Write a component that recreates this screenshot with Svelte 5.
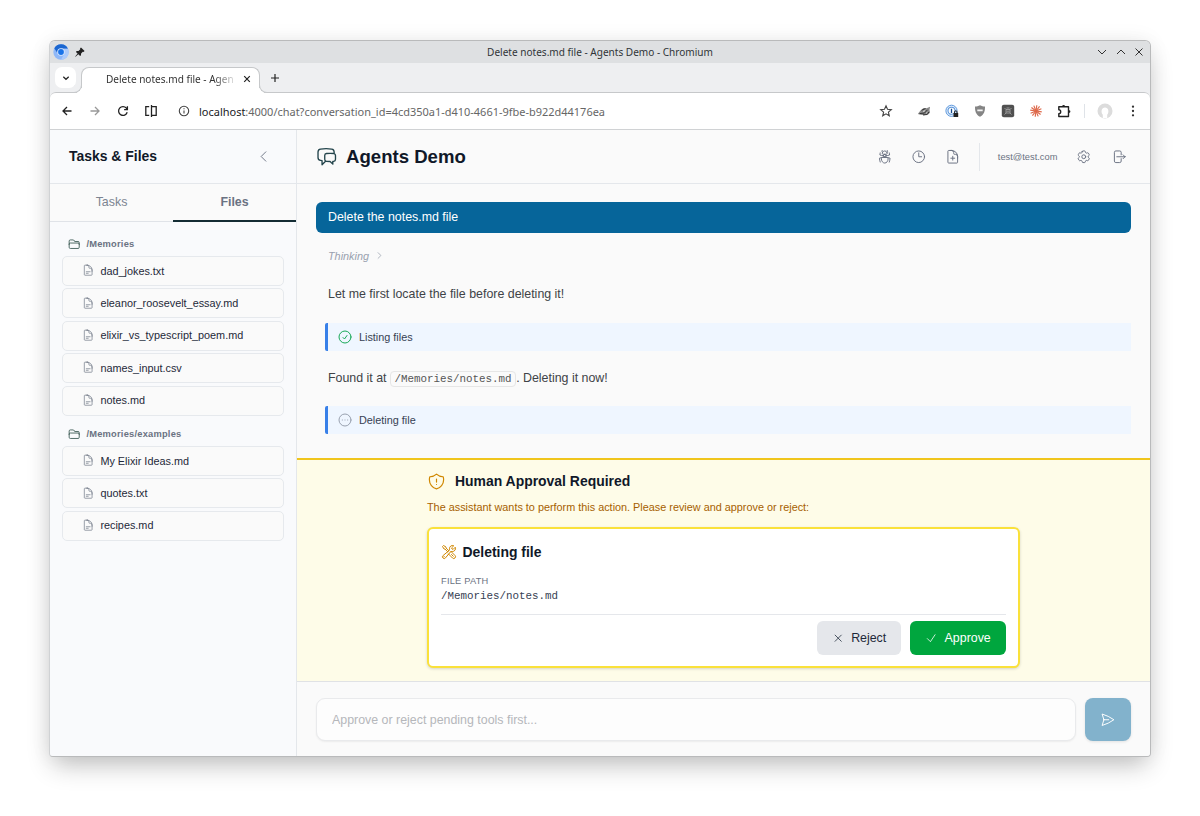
<script>
  const chatIcon = "M20.25 8.511c.884.284 1.5 1.128 1.5 2.097v4.286c0 1.136-.847 2.1-1.98 2.193-.34.027-.68.052-1.02.072v3.091l-3-3c-1.354 0-2.694-.055-4.02-.163a2.115 2.115 0 0 1-.825-.242m9.345-8.334a2.126 2.126 0 0 0-.476-.095 48.64 48.64 0 0 0-8.048 0c-1.131.094-1.976 1.057-1.976 2.192v4.286c0 .837.46 1.58 1.155 1.951m9.345-8.334V6.637c0-1.621-1.152-3.026-2.76-3.235A48.455 48.455 0 0 0 11.25 3c-2.115 0-4.198.137-6.24.402-1.608.209-2.76 1.614-2.76 3.235v6.226c0 1.621 1.152 3.026 2.76 3.235.577.075 1.157.14 1.74.194V21l4.155-4.155";
  const bugIcon = "M12 12.75c1.148 0 2.278.08 3.383.237 1.037.146 1.866.966 1.866 2.013 0 3.728-2.35 6.75-5.25 6.75S6.75 18.728 6.75 15c0-1.046.83-1.867 1.866-2.013A24.204 24.204 0 0 1 12 12.75Zm0 0c2.883 0 5.647.508 8.207 1.44a23.91 23.91 0 0 1-1.152 6.06M12 12.75c-2.883 0-5.647.508-8.208 1.44.125 2.104.52 4.136 1.153 6.06M12 12.75a2.25 2.25 0 0 0 2.248-2.354M12 12.75a2.25 2.25 0 0 1-2.248-2.354M12 8.25c.995 0 1.971-.08 2.922-.236.403-.066.74-.358.795-.762a3.778 3.778 0 0 0-.399-2.25M12 8.25c-.995 0-1.97-.08-2.922-.236-.402-.066-.74-.358-.795-.762a3.734 3.734 0 0 1 .4-2.253M12 8.25a2.25 2.25 0 0 0-2.248 2.146M12 8.25a2.25 2.25 0 0 1 2.248 2.146M8.683 5a6.032 6.032 0 0 1-1.155-1.002c.07-.63.27-1.222.574-1.747m.581 2.749A3.75 3.75 0 0 1 15.318 5m0 0c.427-.283.815-.62 1.155-.999a4.471 4.471 0 0 0-.575-1.752M4.921 6a24.048 24.048 0 0 0-.392 3.314c1.668.546 3.416.914 5.223 1.082M19.08 6c.205 1.08.337 2.187.392 3.314a23.882 23.882 0 0 1-5.223 1.082";
  const clockIcon = "M12 6v6h4.5m4.5 0a9 9 0 1 1-18 0 9 9 0 0 1 18 0Z";
  const docPlusIcon = "M19.5 14.25v-2.625a3.375 3.375 0 0 0-3.375-3.375h-1.5A1.125 1.125 0 0 1 13.5 7.125v-1.5a3.375 3.375 0 0 0-3.375-3.375H8.25m3.75 9v6m3-3H9m1.5-12H5.625c-.621 0-1.125.504-1.125 1.125v17.25c0 .621.504 1.125 1.125 1.125h12.75c.621 0 1.125-.504 1.125-1.125V11.25a9 9 0 0 0-9-9Z";
  const docIcon = "M19.5 14.25v-2.625a3.375 3.375 0 0 0-3.375-3.375h-1.5A1.125 1.125 0 0 1 13.5 7.125v-1.5a3.375 3.375 0 0 0-3.375-3.375H8.25m0 12.75h7.5m-7.5 3H12M10.5 2.25H5.625c-.621 0-1.125.504-1.125 1.125v17.25c0 .621.504 1.125 1.125 1.125h12.75c.621 0 1.125-.504 1.125-1.125V11.25a9 9 0 0 0-9-9Z";
  const folderIcon = "M2.25 12.75V12A2.25 2.25 0 0 1 4.5 9.75h15A2.25 2.25 0 0 1 21.75 12v.75m-8.69-6.44-2.12-2.12a1.5 1.5 0 0 0-1.061-.44H4.5A2.25 2.25 0 0 0 2.25 6v12a2.25 2.25 0 0 0 2.25 2.25h15A2.25 2.25 0 0 0 21.75 18V9a2.25 2.25 0 0 0-2.25-2.25h-5.379a1.5 1.5 0 0 1-1.06-.44Z";
  const cogIcon = "M9.594 3.94c.09-.542.56-.94 1.11-.94h2.593c.55 0 1.02.398 1.11.94l.213 1.281c.063.374.313.686.645.87.074.04.147.083.22.127.325.196.72.257 1.075.124l1.217-.456a1.125 1.125 0 0 1 1.37.49l1.296 2.247a1.125 1.125 0 0 1-.26 1.431l-1.003.827c-.293.241-.438.613-.43.992a7.723 7.723 0 0 1 0 .255c-.008.378.137.75.43.991l1.004.827c.424.35.534.955.26 1.43l-1.298 2.247a1.125 1.125 0 0 1-1.369.491l-1.217-.456c-.355-.133-.75-.072-1.076.124a6.47 6.47 0 0 1-.22.128c-.331.183-.581.495-.644.869l-.213 1.281c-.09.543-.56.94-1.11.94h-2.594c-.55 0-1.019-.398-1.11-.94l-.213-1.281c-.062-.374-.312-.686-.644-.87a6.52 6.52 0 0 1-.22-.127c-.325-.196-.72-.257-1.076-.124l-1.217.456a1.125 1.125 0 0 1-1.369-.49l-1.297-2.247a1.125 1.125 0 0 1 .26-1.431l1.004-.827c.292-.24.437-.613.43-.991a6.932 6.932 0 0 1 0-.255c.007-.38-.138-.751-.43-.992l-1.004-.827a1.125 1.125 0 0 1-.26-1.43l1.297-2.247a1.125 1.125 0 0 1 1.37-.491l1.216.456c.356.133.751.072 1.076-.124.072-.044.146-.086.22-.128.332-.183.582-.495.644-.869l.214-1.28ZM15 12a3 3 0 1 1-6 0 3 3 0 0 1 6 0Z";
  const logoutIcon = "M15.75 9V5.25A2.25 2.25 0 0 0 13.5 3h-6a2.25 2.25 0 0 0-2.25 2.25v13.5A2.25 2.25 0 0 0 7.5 21h6a2.25 2.25 0 0 0 2.25-2.25V15m3 0 3-3m0 0-3-3m3 3H9";
  const shieldIcon = "M12 9v3.75m0-10.036A11.959 11.959 0 0 1 3.598 6 11.99 11.99 0 0 0 3 9.75c0 5.592 3.824 10.29 9 11.622 5.176-1.332 9-6.03 9-11.622 0-1.31-.21-2.57-.598-3.75h-.152c-3.196 0-6.1-1.25-8.25-3.286Zm0 13.036h.008v.008H12v-.008Z";
  const toolsIcon = "M11.42 15.17 17.25 21A2.652 2.652 0 0 0 21 17.25l-5.877-5.877M11.42 15.17l2.496-3.03c.317-.384.74-.626 1.208-.766M11.42 15.17l-4.655 5.653a2.548 2.548 0 1 1-3.586-3.586l6.837-5.63m5.108-.233c.55-.164 1.163-.188 1.743-.14a4.5 4.5 0 0 0 4.486-6.336l-3.276 3.277a3.004 3.004 0 0 1-2.25-2.25l3.276-3.276a4.5 4.5 0 0 0-6.336 4.486c.091 1.076-.071 2.264-.904 2.95l-.102.085m-1.745 1.437L5.909 7.5H4.5L2.25 3.75l1.5-1.5L7.5 4.5v1.409l4.26 4.26m-1.745 1.437 1.745-1.437m6.615 8.206L15.75 15.75M4.867 19.125h.008v.008h-.008v-.008Z";
  const sendIcon = "M6 12 3.269 3.125A59.769 59.769 0 0 1 21.485 12 59.768 59.768 0 0 1 3.27 20.875L5.999 12Zm0 0h7.5";
  const checkCircleIcon = "M9 12.75 11.25 15 15 9.75M21 12a9 9 0 1 1-18 0 9 9 0 0 1 18 0Z";
  const pendingIcon = "M7.9 12h.2m3.8 0h.2m3.8 0h.2M21 12a9 9 0 1 1-18 0 9 9 0 0 1 18 0Z";

  const folders = [
    {
      path: "/Memories",
      files: ["dad_jokes.txt", "eleanor_roosevelt_essay.md", "elixir_vs_typescript_poem.md", "names_input.csv", "notes.md"],
    },
    { path: "/Memories/examples", files: ["My Elixir Ideas.md", "quotes.txt", "recipes.md"] },
  ];

  const rays = [0, 30, 60, 90, 120, 150, 180, 210, 240, 270, 300, 330];

  let tab = $state("Files");
  let draft = $state("");
</script>

{#snippet icon(d, size, width = 1.5)}
  <svg width={size} height={size} viewBox="0 0 24 24" fill="none" stroke="currentColor" stroke-width={width} stroke-linecap="round" stroke-linejoin="round"><path {d} /></svg>
{/snippet}

<div class="window">
  <div class="titlebar">
    <div class="title-left">
      <svg width="16" height="16" viewBox="0 0 16 16">
        <circle cx="8" cy="8" r="7.7" fill="#8fb8f8" />
        <path d="M1.3 4.2A7.7 7.7 0 0 1 15 4.8H8A3.6 3.6 0 0 0 4.8 9.8Z" fill="#1b66d0" />
        <path d="M15 4.8A7.7 7.7 0 0 1 8 15.7l3.2-5.6A3.7 3.7 0 0 0 8 4.8Z" fill="#aecbfa" />
        <circle cx="8" cy="8" r="3.8" fill="#dbe8fd" />
        <circle cx="8" cy="8" r="2.9" fill="#1a73e8" />
      </svg>
      <svg width="10" height="10" viewBox="0 0 10 10"><path d="M6 .4 9.600 4 8.500 4.900 7.800 4.700 6.100 6.500 6 8.300 5.100 9.100 3.300 7.300.6 9.800.2 9.400 2.600 6.600 .9 4.900 1.700 4 3.500 3.900 5.300 2.200 5.100 1.300Z" fill="#222" /></svg>
    </div>
    <span class="title">Delete notes.md file - Agents Demo - Chromium</span>
    <div class="controls">
      <svg width="10" height="10" viewBox="0 0 10 10"><path d="m1 3 4 4 4-4" /></svg>
      <svg width="10" height="10" viewBox="0 0 10 10"><path d="m1 7 4-4 4 4" /></svg>
      <svg width="10" height="10" viewBox="0 0 10 10"><path d="m1.5 1.5 7 7m0-7-7 7" /></svg>
    </div>
  </div>

  <div class="tabstrip">
    <button class="tab-search" aria-label="Search tabs"><svg width="8" height="8" viewBox="0 0 8 8"><path d="m1.3 2.7 2.7 2.6 2.7-2.6" /></svg></button>
    <div class="browser-tab">
      <span>Delete notes.md file - Agen</span>
      <svg width="8" height="8" viewBox="0 0 8 8"><path d="m1.2 1.2 5.6 5.6m0-5.6L1.2 6.8" /></svg>
    </div>
    <svg class="plus" width="10" height="10" viewBox="0 0 10 10"><path d="M5 1v8M1 5h8" /></svg>
  </div>

  <div class="toolbar">
    <div class="nav">
      <svg width="14" height="14" viewBox="0 0 14 14"><path d="M11.5 7H3m4-4L3 7l4 4" /></svg>
      <svg class="off" width="14" height="14" viewBox="0 0 14 14"><path d="M2.5 7H11M7 3l4 4-4 4" /></svg>
      <svg width="14" height="14" viewBox="0 0 14 14"><path d="M11.2 8.3A4.400 4.400 0 1 1 10.4 4.200L11.4 5.300M11.4 2.300v3.300H8.100" /></svg>
      <svg width="14" height="14" viewBox="0 0 14 14"><path d="M5.200 2.600H1.800v8.800H5.200M7.500 2.600h4.700v8.800H7.500M7.500 1v12" /></svg>
    </div>
    <div class="url">
      <svg width="12" height="12" viewBox="0 0 12 12"><circle cx="6" cy="6" r="4.7" /><path d="M6 5.4v3.1M6 3.3v1" /></svg>
      <span><b>localhost</b>:4000/chat?conversation_id=4cd350a1-d410-4661-9fbe-b922d44176ea</span>
    </div>
    <svg class="star" width="14" height="14" viewBox="0 0 14 14"><path d="m7 1.8 1.5 3.5 3.8.3-2.9 2.5.9 3.7L7 9.8l-3.3 2 .9-3.7-2.9-2.5 3.8-.3z" /></svg>
    <div class="extensions">
      <svg width="14" height="14" viewBox="0 0 14 14">
        <path d="M.8 10 3.500 6.500 6.500 4l3 .2 3.600-1.400-.6 3.200.6 2.600-2 2-4 .6-3.400-.4Z" fill="#8a8a8a" />
        <path d="m4.500 6.300 4-1.800M2.500 9.600l5-.6 3-3.200M6 10.900l4.200-.4 1.600-2.500" stroke="#333" stroke-width="1" fill="none" />
        <path d="m6 7.500 2-.8M9.200 9.200l1-.9" stroke="#fff" stroke-width=".7" />
      </svg>
      <svg width="14" height="14" viewBox="0 0 14 14">
        <circle cx="6.5" cy="6.8" r="5.6" fill="#e4effb" stroke="#5e98dc" stroke-width="1" />
        <circle cx="6.5" cy="6.8" r="3.5" fill="#fff" stroke="#5e98dc" stroke-width="1.1" />
        <path d="M6.5 4.7v4.2" stroke="#174a8c" stroke-width="1.3" />
        <path d="M8.500 9h4.700v4H8.500z" fill="#222" />
        <path d="M9.500 9.200V8.100a1.300 1.300 0 0 1 2.600 0v1.100" fill="none" stroke="#222" />
      </svg>
      <svg width="14" height="14" viewBox="0 0 14 14"><path d="M7 1.2c1.6.9 3.3 1.2 5 1.3.1 5-1 8-5 10.3C3 10.5 1.9 7.5 2 2.5c1.7-.1 3.4-.4 5-1.3Z" fill="#858585" /><path d="M4.3 6.4h5.4" stroke="#f4f4f4" stroke-width="1.8" /></svg>
      <svg width="14" height="14" viewBox="0 0 14 14"><rect x=".8" y=".8" width="12.4" height="12.4" rx="2" fill="#505050" /><path d="M5 5.500h4v3.500H5zM3.500 4l1.500 1.500M10.500 4 9 5.500M3.500 10.500 5 9M10.500 10.500 9 9M5.500 7.200h3M5.500 4h3" fill="none" stroke="#aaa" stroke-width=".8" /></svg>
      <svg width="14" height="14" viewBox="0 0 14 14">
        {#each rays as angle}
          <path d="M7 7V1.2" stroke="#dd6748" stroke-width="1.15" transform="rotate({angle + 8} 7 7)" />
        {/each}
      </svg>
      <svg width="14" height="14" viewBox="0 0 14 14"><path d="M1.800 2.800h9.700v9.700H1.800V9.600a1.900 1.900 0 0 0 0-3.800Z" fill="none" stroke="#222" stroke-width="1.4" stroke-linejoin="round" /><path d="M5.200 2.300a1.400 1.400 0 0 1 2.800 0ZM12 6.200a1.400 1.400 0 0 1 0 2.800Z" fill="#222" /></svg>
    </div>
    <div class="separator"></div>
    <svg class="avatar" width="16" height="16" viewBox="0 0 16 16"><circle cx="8" cy="8" r="7.5" fill="#dcdcdc" /><path d="M5.8 15v-3.2C3.5 9 4.6 4.5 8 4.5S12.5 9 10.2 11.8V15Z" fill="#fff" /></svg>
    <svg class="dots" width="4" height="12" viewBox="0 0 4 12"><circle cx="2" cy="1.7" r="1.15" /><circle cx="2" cy="6" r="1.15" /><circle cx="2" cy="10.3" r="1.15" /></svg>
  </div>

  <div class="app">
    <aside>
      <div class="side-head">
        <h2>Tasks &amp; Files</h2>
        {@render icon("M15.75 19.5 8.25 12l7.5-7.5", 15)}
      </div>
      <div class="tabs">
        {#each ["Tasks", "Files"] as name}
          <button class:active={tab === name} onclick={() => (tab = name)}>{name}</button>
        {/each}
      </div>
      <div class="tree">
        {#each folders as folder}
          <div class="folder">
            {@render icon(folderIcon, 12.4, 1.7)}
            <span>{folder.path}</span>
          </div>
          <div class="files">
            {#each folder.files as file}
              <div class="file">
                {@render icon(docIcon, 12.4)}
                <span>{file}</span>
              </div>
            {/each}
          </div>
        {/each}
      </div>
    </aside>

    <main>
      <header>
        <div class="brand">{@render icon(chatIcon, 21.5)}</div>
        <h1>Agents Demo</h1>
        <div class="actions">
          {@render icon(bugIcon, 15.5)}
          {@render icon(clockIcon, 15.5)}
          {@render icon(docPlusIcon, 15.5)}
        </div>
        <div class="account">
          <span>test@test.com</span>
          {@render icon(cogIcon, 15.5)}
          {@render icon(logoutIcon, 15.5)}
        </div>
      </header>

      <section class="messages">
        <div class="user-message">Delete the notes.md file</div>
        <div class="thinking">Thinking {@render icon("m8.25 4.5 7.5 7.5-7.5 7.5", 9, 2)}</div>
        <div class="reply">Let me first locate the file before deleting it!</div>
        <div class="tool-call"><i class="done">{@render icon(checkCircleIcon, 16)}</i>Listing files</div>
        <div class="reply">Found it at <code>/Memories/notes.md</code>. Deleting it now!</div>
        <div class="tool-call"><i>{@render icon(pendingIcon, 16)}</i>Deleting file</div>
      </section>

      <section class="approval">
        <div class="approval-inner">
          <h3>{@render icon(shieldIcon, 19)}Human Approval Required</h3>
          <p>The assistant wants to perform this action. Please review and approve or reject:</p>
          <div class="card">
            <h4>{@render icon(toolsIcon, 16)}Deleting file</h4>
            <div class="label">FILE PATH</div>
            <div class="value">/Memories/notes.md</div>
            <div class="buttons">
              <button class="reject">{@render icon("M6 18 18 6M6 6l12 12", 12.4)}Reject</button>
              <button class="approve">{@render icon("m4.5 12.75 6 6 9-13.5", 12.4)}Approve</button>
            </div>
          </div>
        </div>
      </section>

      <footer>
        <input bind:value={draft} placeholder="Approve or reject pending tools first..." />
        <button aria-label="Send">{@render icon(sendIcon, 15.5)}</button>
      </footer>
    </main>
  </div>
</div>

<style>
  :global(body) {
    background: #fff;
    height: 816px;
    overflow: hidden;
  }

  * {
    box-sizing: border-box;
  }

  svg {
    display: block;
    flex: none;
  }

  h1, h2, h3, h4, p {
    margin: 0;
  }

  button {
    border: 0;
    padding: 0;
    background: none;
    font-family: inherit;
  }

  .window {
    width: 1102px;
    height: 717px;
    margin: 40px 0 0 49px;
    display: flex;
    flex-direction: column;
    overflow: hidden;
    border: 1px solid #b9babb;
    border-left-color: #d0d2d4;
    border-radius: 6px 6px 4px 4px;
    background: #eeeff1;
    box-shadow: 0 12px 26px -4px rgba(0, 0, 0, 0.24), 0 0 22px rgba(0, 0, 0, 0.06);
    font-family: "Liberation Sans", Arial, sans-serif;
  }

  .titlebar {
    height: 22px;
    flex: none;
    display: grid;
    grid-template-columns: 1fr auto 1fr;
    align-items: center;
    background: #dee0e2;
    font: 10.05px "Noto Sans", sans-serif;
    color: #303438;
  }

  .title-left {
    display: flex;
    align-items: center;
    gap: 6px;
    padding-left: 3px;
  }

  .controls {
    display: flex;
    justify-content: flex-end;
    gap: 8.5px;
    padding-right: 6px;
    fill: none;
    stroke: #333;
    stroke-width: 1;
  }

  .tabstrip {
    height: 29px;
    flex: none;
    display: flex;
    align-items: center;
    fill: none;
    stroke: #222;
    stroke-width: 1.2;
  }

  .tab-search {
    width: 21px;
    height: 21px;
    margin-left: 5px;
    display: grid;
    place-items: center;
    border-radius: 7px;
    background: #fff;
  }

  .browser-tab {
    position: relative;
    z-index: 1;
    align-self: flex-end;
    width: 179px;
    height: 26px;
    margin: 0 0 -1px 5px;
    padding: 0 8px 3px 24px;
    display: flex;
    align-items: center;
    justify-content: space-between;
    border: 1px solid #c6c8ca;
    border-bottom: 0;
    border-radius: 8px 8px 0 0;
    background: #fff;
    font: 10.05px "Noto Sans", sans-serif;
    color: #333;
  }

  /* flared feet of the active tab */
  .browser-tab::before,
  .browser-tab::after {
    content: "";
    position: absolute;
    bottom: 0;
    width: 8px;
    height: 8px;
    border-bottom: 1px solid #c6c8ca;
    box-sizing: border-box;
    background: #eeeff1;
  }

  .browser-tab::before {
    left: -8px;
    border-right: 1px solid #c6c8ca;
    border-bottom-right-radius: 8px;
    box-shadow: 3px 3px 0 #fff;
    clip-path: inset(0 -1px 0 0);
  }

  .browser-tab::after {
    right: -8px;
    border-left: 1px solid #c6c8ca;
    border-bottom-left-radius: 8px;
    box-shadow: -3px 3px 0 #fff;
    clip-path: inset(0 0 0 -1px);
  }

  .browser-tab span {
    white-space: nowrap;
    mask-image: linear-gradient(90deg, #000 108px, transparent 132px);
  }

  .plus {
    margin-left: 10px;
  }

  .toolbar {
    height: 38px;
    flex: none;
    display: flex;
    align-items: center;
    background: #fff;
    border-top: 1px solid #c6c8ca;
    border-bottom: 1px solid #d0d2d4;
    border-radius: 6px 6px 0 0;
  }

  .nav {
    display: flex;
    gap: 14px;
    margin-left: 10px;
    fill: none;
    stroke: #222;
    stroke-width: 1.3;
  }

  .nav .off {
    stroke: #999;
  }

  .url {
    display: flex;
    align-items: center;
    gap: 9px;
    margin-left: 20px;
    font: 10.98px "Noto Sans", sans-serif;
    color: #666;
  }

  .url b {
    font-weight: 400;
    color: #202124;
  }

  .url svg {
    fill: none;
    stroke: #444;
    stroke-width: 1.1;
  }

  .star {
    margin-left: auto;
    fill: none;
    stroke: #444;
    stroke-width: 1.1;
  }

  .extensions {
    display: flex;
    gap: 14px;
    margin-left: 24px;
  }

  .separator {
    width: 1px;
    height: 14px;
    margin-left: 13px;
    background: #dfe3e8;
  }

  .avatar {
    margin-left: 12px;
  }

  .dots {
    margin: 0 15px 0 18px;
    fill: #333;
  }

  .app {
    flex: 1;
    min-height: 0;
    display: flex;
  }

  aside {
    width: 247px;
    flex: none;
    background: #f9fafc;
    border-right: 1px solid #e4e7eb;
  }

  .side-head {
    height: 54px;
    display: flex;
    align-items: center;
    justify-content: space-between;
    padding: 0 25px 1px 19px;
    border-bottom: 1px solid #e4e7eb;
    color: #6a7282;
  }

  h2 {
    font-size: 13.95px;
    line-height: 20px;
    color: #101828;
  }

  .side-head h2 {
    padding-bottom: 1px;
  }

  .tabs {
    height: 38px;
    display: flex;
    background: #fafafa;
    border-bottom: 1px solid #e0e3e8;
  }

  .tabs button {
    flex: 1;
    height: 38px;
    font-size: 12.4px;
    color: #7c8491;
    border-bottom: 2px solid transparent;
  }

  .tabs .active {
    font-weight: 700;
    color: #6a7282;
    border-color: #142c34;
  }

  .tree {
    padding: 11px 12px;
  }

  .folder {
    height: 22px;
    display: flex;
    align-items: center;
    gap: 6px;
    padding-left: 6px;
    font-size: 9.3px;
    font-weight: 700;
    letter-spacing: 0.23px;
    color: #6a7282;
  }

  .folder :global(svg) {
    color: #3d5a55;
  }

  .files {
    display: grid;
    gap: 2.4px;
    margin: 1px 0 7.5px;
  }

  .file {
    height: 30px;
    display: flex;
    align-items: center;
    gap: 6px;
    padding: 0 0 1px 19px;
    border: 1px solid #e6e9ed;
    border-radius: 5px;
    background: #fafafa;
    font-size: 10.85px;
    color: #1e2939;
  }

  .file :global(svg) {
    color: #7c8491;
  }

  main {
    flex: 1;
    min-width: 0;
    display: flex;
    flex-direction: column;
    background: #fafafa;
  }

  header {
    height: 54px;
    flex: none;
    display: flex;
    align-items: center;
    padding: 0 24px 0 18.5px;
    border-bottom: 1px solid #e4e7eb;
    color: #6a7282;
  }

  .brand {
    margin-right: 9px;
    color: #24454c;
  }

  h1 {
    font-size: 18.6px;
    color: #101828;
  }

  .actions {
    display: flex;
    gap: 18.5px;
    margin-left: auto;
  }

  .account {
    height: 28px;
    display: flex;
    align-items: center;
    gap: 18.8px;
    margin-left: 18.5px;
    padding-left: 18px;
    border-left: 1px solid #e4e7eb;
    font-size: 9.3px;
  }

  .messages {
    height: 274px;
    flex: none;
    padding: 18px 19px 0;
    font-size: 12.4px;
    color: #364153;
  }

  .user-message {
    height: 31px;
    padding-left: 12px;
    line-height: 30px;
    border-radius: 6px;
    background: #06659a;
    color: #fff;
  }

  .thinking {
    height: 31px;
    display: flex;
    align-items: center;
    gap: 6px;
    margin: 7px 0 8px 12px;
    font-size: 10.85px;
    font-style: italic;
    color: #99a1af;
  }

  .reply {
    height: 31px;
    padding-left: 12px;
    line-height: 31px;
    color: #404347;
  }

  .reply code {
    padding: 1px 3.5px;
    border: 1px solid #e6e6e6;
    border-radius: 4px;
    font: 10.85px "Liberation Mono", monospace;
    color: #555;
  }

  .tool-call {
    height: 28px;
    display: flex;
    align-items: center;
    gap: 6px;
    margin: 12.5px 0 12px 9px;
    padding-left: 9px;
    border-left: 3px solid #3880e8;
    border-radius: 2px 0 0 2px;
    background: #eff6ff;
    font-size: 10.85px;
  }

  .tool-call i {
    color: #99a1af;
  }

  .tool-call .done {
    color: #18a957;
  }

  .approval {
    height: 223px;
    flex: none;
    border-top: 2px solid #f0c51c;
    background: #fefce8;
  }

  .approval-inner {
    width: 593px;
    margin: 0 auto;
    padding-top: 10px;
  }

  h3 {
    height: 22px;
    display: flex;
    align-items: center;
    gap: 9px;
    font-size: 13.95px;
    color: #101828;
  }

  h3 :global(svg),
  h4 :global(svg) {
    color: #d08700;
  }

  p {
    margin: 7px 0 12px;
    font-size: 10.85px;
    line-height: 16px;
    color: #a65f00;
  }

  .card {
    height: 141px;
    padding: 13px 12px 0;
    border: 2px solid #fae13a;
    border-radius: 6px;
    background: #fff;
    box-shadow: 0 1px 3px rgba(0, 0, 0, 0.16);
  }

  h4 {
    height: 20px;
    display: flex;
    align-items: center;
    gap: 5.5px;
    font-size: 13.95px;
    color: #101828;
  }

  .label {
    margin-top: 13px;
    font-size: 9.3px;
    line-height: 13px;
    letter-spacing: 0.2px;
    color: #6a7282;
  }

  .value {
    margin-top: 1px;
    font: 10.85px/15px "Liberation Mono", monospace;
    color: #364153;
  }

  .buttons {
    display: flex;
    justify-content: flex-end;
    gap: 9px;
    margin-top: 10px;
    padding-top: 6px;
    border-top: 1px solid #e5e7eb;
  }

  .buttons button {
    height: 34px;
    display: flex;
    align-items: center;
    justify-content: center;
    gap: 7px;
    padding-bottom: 1px;
    border-radius: 6px;
    font-size: 12.4px;
  }

  .buttons button :global(svg) {
    margin-top: 2px;
  }

  .reject {
    width: 84px;
    background: #e5e7eb;
    color: #1e2939;
  }

  .approve {
    width: 96px;
    background: #00a63e;
    color: #fff;
  }

  footer {
    flex: 1;
    display: flex;
    gap: 9px;
    padding: 16px 19px 0;
    border-top: 1px solid #e0e2e5;
  }

  input {
    flex: 1;
    height: 43px;
    padding: 0 15px;
    border: 1px solid #e9eaec;
    border-radius: 9px;
    outline: 0;
    background: #fdfdfd;
    box-shadow: 0 1px 2px rgba(0, 0, 0, 0.06);
    font: 12.4px "Liberation Sans", Arial, sans-serif;
  }

  input::placeholder {
    color: #b5b7bb;
  }

  footer button {
    width: 46px;
    height: 43px;
    display: grid;
    place-items: center;
    border-radius: 8px;
    background: #82b2cc;
    color: #fff;
    box-shadow: 0 1px 3px rgba(0, 0, 0, 0.1);
  }
</style>
